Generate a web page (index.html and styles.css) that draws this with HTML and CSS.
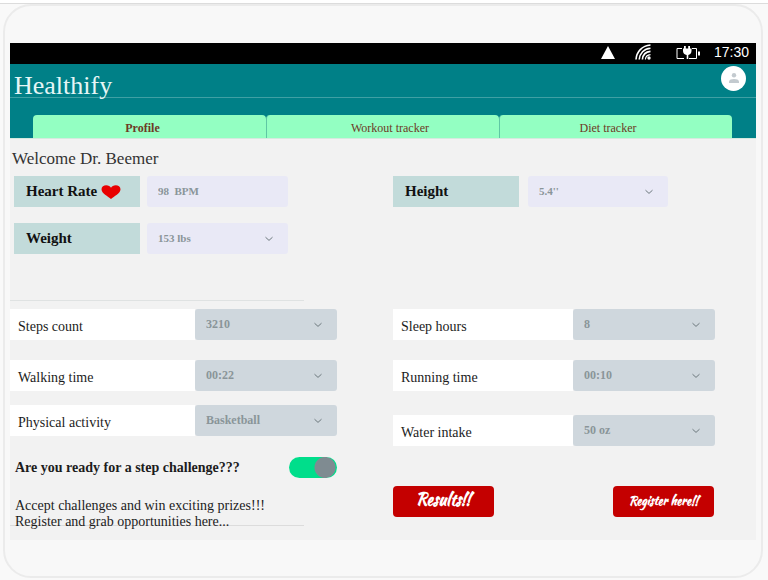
FILE: index.html
```html
<!DOCTYPE html>
<html lang="en">
<head>
<meta charset="utf-8">
<meta name="viewport" content="width=device-width, initial-scale=1">
<title>Healthify</title>
<link rel="stylesheet" href="styles.css">
</head>
<body>
<svg class="sprite">
  <symbol id="chevron" viewBox="0 0 8 6"><path d="M.5 1.200 4 4.400 7.500 1.200" fill="none" stroke="currentColor" stroke-width="1"/></symbol>
</svg>
<div class="device">
  <div class="screen">
    <div class="status">
      <svg class="signal" viewBox="0 0 14 13" width="14" height="13"><path d="M7 0 14 13H0Z" fill="#fff"/></svg>
      <svg class="wifi" viewBox="0 0 16 16" width="16" height="16">
        <g fill="none" stroke="#fff" stroke-width="1.6">
          <path d="M1 15.500C1.500 8 7 1.500 15.500 1"/>
          <path d="M4.200 15.500C4.600 9.500 9 4.600 15.500 4.200"/>
          <path d="M7.400 15.500C7.800 11 10.800 7.800 15.500 7.400"/>
          <path d="M10.400 15.500C10.600 12.500 12.500 10.800 15.500 10.600" stroke-width="1.200"/>
        </g>
        <circle cx="14" cy="14" r="1.700" fill="#fff"/>
      </svg>
      <svg class="battery" viewBox="0 0 24 13" width="24" height="13">
        <path d="M6 2.500H1V12.500H8M16 2.500H20.500V12.500H13" fill="none" stroke="#fff" stroke-width="1"/>
        <path d="M22 5.500h2v4h-2zM8 0h1.800v2.500h2.400V0H14v2.500h1.500V5c0 2.200-1.500 3.700-3.200 4V13h-1.600V9C8.500 8.700 7 7.200 7 5V2.500h1z" fill="#fff"/>
      </svg>
      <time>17:30</time>
    </div>
    <header class="header">
      <div class="brand">
        <h1>Healthify</h1>
        <button class="avatar" type="button" aria-label="Account">
          <svg viewBox="0 0 10 10" width="10" height="10" fill="#c3cacf"><circle cx="5" cy="2.300" r="2.200"/><path d="M0 10V8.500C0 6.800 2.500 6 5 6s5 .8 5 2.500V10z"/></svg>
        </button>
      </div>
      <nav class="tabs">
        <a href="#profile" class="active">Profile</a>
        <a href="#workout">Workout tracker</a>
        <a href="#diet">Diet tracker</a>
      </nav>
    </header>
    <main>
      <h2>Welcome Dr. Beemer</h2>
      <section class="columns vitals">
        <div class="stack">
          <div class="vital">
            <label for="heart">Heart Rate
              <svg viewBox="0 0 20 14" width="20" height="14"><path d="M10 14C7 11.200.5 8.500.5 4.200.5 1.800 2.800.300 5.200.300 7.400.300 9.200 1.300 10 2.800 10.800 1.300 12.600.300 14.800.300 17.200.300 19.500 1.800 19.500 4.200 19.500 8.500 13 11.200 10 14Z" fill="#e80000"/></svg>
            </label>
            <div class="field"><input id="heart" type="text" value="98  BPM"></div>
          </div>
          <div class="vital">
            <label for="weight">Weight</label>
            <div class="field"><select id="weight"><option>153 lbs</option></select><svg><use href="#chevron"/></svg></div>
          </div>
        </div>
        <div class="stack">
          <div class="vital wide-gap">
            <label for="height">Height</label>
            <div class="field"><select id="height"><option>5.4''</option></select><svg><use href="#chevron"/></svg></div>
          </div>
        </div>
      </section>
      <hr class="rule">
      <section class="columns activity">
        <div class="stack">
          <div class="metric">
            <label for="steps">Steps count</label>
            <div class="field"><select id="steps"><option>3210</option></select><svg><use href="#chevron"/></svg></div>
          </div>
          <div class="metric">
            <label for="walking">Walking time</label>
            <div class="field"><select id="walking"><option>00:22</option></select><svg><use href="#chevron"/></svg></div>
          </div>
          <div class="metric tight">
            <label for="physical">Physical activity</label>
            <div class="field"><select id="physical"><option>Basketball</option></select><svg><use href="#chevron"/></svg></div>
          </div>
          <div class="challenge">
            <label for="challenge">Are you ready for a step challenge???</label>
            <input id="challenge" type="checkbox" role="switch" checked>
          </div>
          <p class="promo">Accept challenges and win exciting prizes!!!<br>Register and grab opportunities here...</p>
        </div>
        <div class="stack">
          <div class="metric">
            <label for="sleep">Sleep hours</label>
            <div class="field"><select id="sleep"><option>8</option></select><svg><use href="#chevron"/></svg></div>
          </div>
          <div class="metric">
            <label for="running">Running time</label>
            <div class="field"><select id="running"><option>00:10</option></select><svg><use href="#chevron"/></svg></div>
          </div>
          <div class="metric loose">
            <label for="water">Water intake</label>
            <div class="field"><select id="water"><option>50 oz</option></select><svg><use href="#chevron"/></svg></div>
          </div>
          <div class="actions">
            <button class="large" type="button">Results!!</button>
            <button type="button">Register here!!</button>
          </div>
        </div>
      </section>
    </main>
  </div>
</div>
</body>
</html>
```
FILE: styles.css
```css
* {
  box-sizing: border-box;
}

html {
  background: #f9f9f9;
}

body {
  margin: 0;
  padding: 1px 5px 1px 3px;
  border-top: 3px solid #fff;
  box-shadow: inset 0 1px #dcdcdc;
  font-family: "Liberation Serif", "Times New Roman", serif;
  color: #1c1c1c;
}

h1,
h2,
p {
  margin: 0;
  font-weight: 400;
}

.sprite {
  display: none;
}

.device {
  padding: 37px 5px 36px;
  border: 2px solid #ebebeb;
  border-radius: 28px;
  background: #f8f8f8;
}

.screen {
  background: #f2f2f2;
}

.status {
  display: flex;
  align-items: center;
  justify-content: flex-end;
  height: 21px;
  padding: 0 7px 3px 0;
  background: #000;
  color: #fff;
  font: 14px/18px "Liberation Sans", Arial, sans-serif;
}

.wifi {
  margin-left: 20px;
}

.battery {
  margin: 0 14px 0 25px;
}

.header {
  background: #008087;
}

.brand {
  display: flex;
  align-items: center;
  justify-content: space-between;
  height: 34px;
  padding: 0 10px 0 4px;
  border-bottom: 1px solid #3fa0a4;
}

.brand h1 {
  padding-top: 10px;
  color: #e6f6f6;
  font-size: 26px;
  line-height: 30px;
}

.avatar {
  display: grid;
  place-items: center;
  width: 25px;
  height: 25px;
  margin-bottom: 5px;
  padding: 0;
  border: 0;
  border-radius: 50%;
  background: #fff;
}

.tabs {
  display: grid;
  grid-template-columns: repeat(3, 1fr);
  padding: 17px 24px 0 23px;
  border-bottom: 1px solid #d5eadf;
}

.tabs a {
  height: 23px;
  padding: 3px 16px 0 0;
  border-radius: 4px 4px 0 0;
  background: #93ffc2;
  color: #6d3a25;
  font-size: 12px;
  line-height: 20px;
  text-align: center;
  text-decoration: none;
}

.tabs a + a {
  border-left: 1px solid #5fc7a4;
}

.tabs a:nth-child(2) {
  padding: 3px 0 0 14px;
}

.tabs .active {
  padding-right: 14px;
  font-weight: 700;
}

h2 {
  padding: 10px 2px 7px;
  color: #333;
  font-size: 17px;
  line-height: 20px;
}

.columns {
  display: grid;
  grid-template-columns: 383fr 363fr;
}

.stack {
  display: flex;
  flex-direction: column;
}

.vitals .stack {
  gap: 16px;
}

.vital {
  display: flex;
  gap: 7px;
  width: 278px;
  padding-left: 4px;
}

.vital.wide-gap {
  gap: 9px;
  width: 275px;
  padding-left: 0;
}

.vital label {
  display: flex;
  flex: 0 0 126px;
  align-items: center;
  gap: 4px;
  height: 31px;
  padding-left: 12px;
  background: #c2dbda;
  color: #111;
  font-size: 15px;
  font-weight: 700;
}

.field {
  position: relative;
  flex: 1;
  height: 31px;
}

.field input,
.field select {
  display: block;
  width: 100%;
  height: 100%;
  margin: 0;
  padding: 0 11px 2px;
  border: 0;
  border-radius: 3px;
  appearance: none;
  background: #e9e9f6;
  color: #8a9599;
  font: 700 11px "Liberation Serif", "Times New Roman", serif;
  white-space: pre;
}

.field svg {
  position: absolute;
  top: 13px;
  right: 15px;
  width: 8px;
  height: 6px;
  color: #6d787d;
  pointer-events: none;
}

.rule {
  width: 294px;
  margin: 46px 0 8px;
  border: 0;
  border-top: 1px solid #dfe2e2;
}

.metric {
  display: flex;
  width: 327px;
  margin-bottom: 20px;
}

.metric label {
  flex: 1;
  height: 31px;
  padding: 2px 8px 0;
  background: #fff;
  font-size: 14px;
  line-height: 31px;
}

.metric .field {
  flex: 0 0 142px;
}

.metric select {
  background: #cfd7dd;
  font-size: 12px;
}

.columns .stack:last-child .metric {
  width: 322px;
}

.metric:has(+ .tight) {
  margin-bottom: 14px;
}

.metric:has(+ .loose) {
  margin-bottom: 24px;
}

.challenge {
  display: flex;
  align-items: center;
  justify-content: space-between;
  width: 327px;
  margin-top: 1px;
  padding-left: 5px;
  font-size: 14px;
  font-weight: 700;
}

.challenge input {
  width: 48px;
  height: 21px;
  margin: 0;
  border-radius: 11px;
  appearance: none;
  background: radial-gradient(circle at 36px 50%, #7f8b91 10px, transparent 11px) #00de8b;
}

.promo {
  width: 294px;
  margin: 20px 0 10px;
  padding-left: 5px;
  background: linear-gradient(#dcdcdc, #dcdcdc) 0 27px / 100% 1px no-repeat;
  font-size: 14px;
  line-height: 16px;
}

.actions {
  display: flex;
  justify-content: space-between;
  width: 321px;
  margin-top: 20px;
}

.actions button {
  width: 101px;
  height: 31px;
  padding: 0 0 2px;
  border: 0;
  border-radius: 4px;
  background: #c40000;
  color: #fff;
  font: 700 12px "Kaushan Script", cursive;
}

.actions .large {
  padding-bottom: 4px;
  font-size: 16px;
}
```
